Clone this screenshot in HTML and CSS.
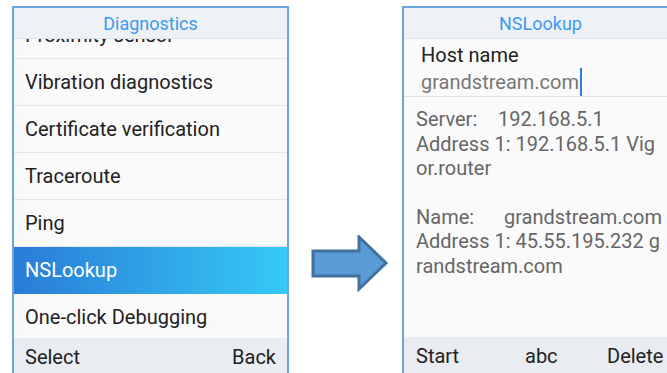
FILE: index.html
```html
<!DOCTYPE html>
<html lang="en">
<head>
  <meta charset="UTF-8">
  <meta name="viewport" content="width=device-width, initial-scale=1.0">
  <title>Diagnostics - NSLookup</title>
  <link rel="stylesheet" href="styles.css">
</head>
<body>

  <div class="screen">
    <div class="title">Diagnostics</div>
    <div class="list-wrap">
      <ul class="menu">
        <li>Proximity sensor</li>
        <li>Vibration diagnostics</li>
        <li>Certificate verification</li>
        <li>Traceroute</li>
        <li>Ping</li>
        <li class="active">NSLookup</li>
        <li>One-click Debugging</li>
      </ul>
    </div>
    <div class="softkeys">
      <span>Select</span>
      <span>Back</span>
    </div>
  </div>

  <div class="arrow-box">
    <svg width="78" height="58" viewBox="0 0 78 58">
      <polygon points="2,16 48,16 48,2 75,28 48,54 48,41 2,41" fill="#5b9bd5" stroke="#41719c" stroke-width="3" stroke-linejoin="miter"/>
    </svg>
  </div>

  <div class="screen">
    <div class="title">NSLookup</div>
    <div class="field">
      <div class="field-label">Host name</div>
      <div class="field-value">grandstream.com<span class="caret"></span></div>
    </div>
    <div class="result">
      <p><span class="key">Server:</span>192.168.5.1<br>Address 1: 192.168.5.1 Vig<br>or.router</p>
      <p><span class="key wide">Name:</span>grandstream.com<br>Address 1: 45.55.195.232 g<br>randstream.com</p>
    </div>
    <div class="softkeys three">
      <span>Start</span>
      <span>abc</span>
      <span>Delete</span>
    </div>
  </div>

</body>
</html>
```

FILE: styles.css
```css
body {
  margin: 0;
  padding: 6px 0 0 12px;
  width: 667px;
  height: 373px;
  overflow: hidden;
  box-sizing: border-box;
  display: flex;
  align-items: flex-start;
  background: #fff;
  font-family: Roboto, "Noto Sans", sans-serif;
}

.screen {
  flex: none;
  width: 277px;
  height: 390px;
  box-sizing: border-box;
  border: 2px solid #6aa5e0;
  background: #fafafa;
  display: flex;
  flex-direction: column;
}

.title {
  height: 30px;
  line-height: 31px;
  text-align: center;
  background: #eef2f6;
  color: #3c9af0;
  font-size: 18px;
  border-bottom: 1px solid #e0e3e6;
}

.list-wrap {
  height: 299px;
  overflow: hidden;
}

.menu {
  list-style: none;
  margin: -27px 0 0 0;
  padding: 0;
}

.menu li {
  height: 46px;
  line-height: 46px;
  padding-left: 11px;
  font-size: 20px;
  color: #222;
  border-bottom: 1px solid #e6e6e6;
}

.menu li.active {
  color: #fff;
  background: linear-gradient(to right, #2a7cd7, #35c9f6);
  border-bottom-color: transparent;
}

.softkeys {
  flex: 1;
  background: #e9ecf0;
  display: flex;
  justify-content: space-between;
  padding: 7px 11px 0 11px;
  font-size: 20px;
  color: #222;
}

.softkeys.three {
  display: grid;
  grid-template-columns: 109px 82px auto;
  justify-content: start;
  align-content: start;
  padding: 7px 0 0 12px;
}

.arrow-box {
  flex: none;
  width: 113px;
  padding-top: 229px;
  display: flex;
  justify-content: center;
}

.arrow-box svg {
  margin-left: 8px;
}

.field {
  height: 58px;
  padding: 4px 0 0 17px;
  box-sizing: border-box;
  border-bottom: 1px solid #e0e3e6;
  font-size: 20px;
}

.field-label {
  color: #222;
  line-height: 24px;
}

.field-value {
  color: #777;
  line-height: 30px;
}

.caret {
  display: inline-block;
  width: 2px;
  height: 28px;
  margin-left: 1px;
  vertical-align: -7px;
  background: #2a7fe0;
}

.result {
  height: 240px;
  padding: 10px 0 0 12px;
  box-sizing: border-box;
  font-size: 20px;
  line-height: 24.5px;
  color: #666;
  white-space: nowrap;
}

.result p {
  margin: 0 0 24px 0;
}

.key {
  display: inline-block;
  width: 82px;
}

.key.wide {
  width: 88px;
}
```
